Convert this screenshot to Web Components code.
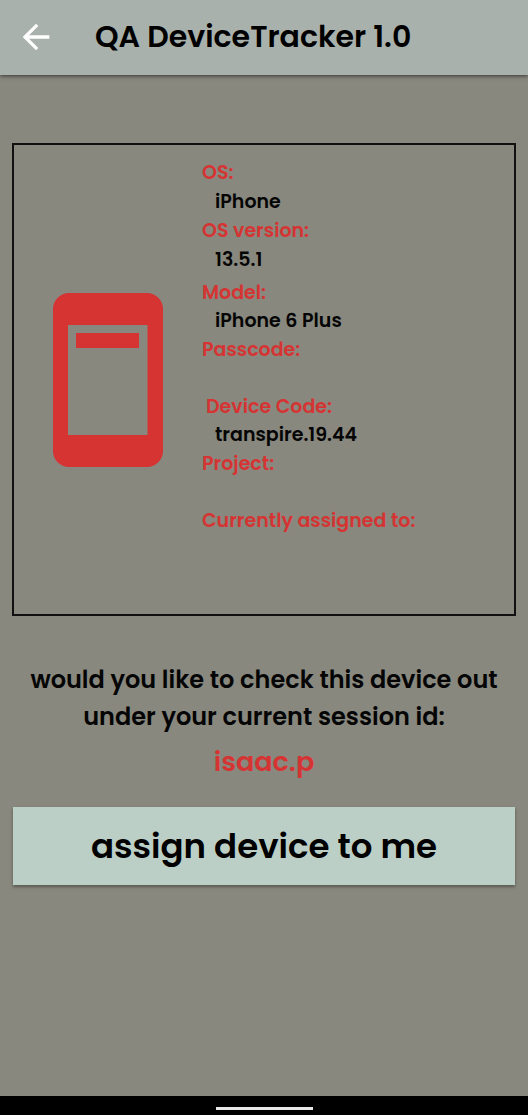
<!DOCTYPE html>
<html lang="en">
<head>
<meta charset="utf-8">
<meta name="viewport" content="width=device-width, initial-scale=1">
<title>QA DeviceTracker 1.0</title>
<style>
  html, body { margin: 0; height: 100%; }
  body {
    --accent: #d63333;
    --page: #88887e;
    background: var(--page);
    color: #050505;
    font-family: Poppins, Inter, sans-serif;
    font-weight: 600;
  }
</style>
</head>
<body>
<tracker-app>
  <app-header slot="header">QA DeviceTracker 1.0</app-header>
  <device-card>
    <device-field roomy label="OS:">iPhone</device-field>
    <device-field roomy label="OS version:">13.5.1</device-field>
    <device-field class="model" label="Model:">iPhone 6 Plus</device-field>
    <device-field label="Passcode:"></device-field>
    <device-field inset label="Device Code:">transpire.19.44</device-field>
    <device-field label="Project:"></device-field>
    <device-field label="Currently assigned to:"></device-field>
  </device-card>
  <session-prompt user="isaac.p">would you like to check this device out under your current session id:</session-prompt>
  <assign-button>assign device to me</assign-button>
  <gesture-bar slot="footer"></gesture-bar>
</tracker-app>

<script>
  const define = (name, html, setup) => {
    const template = document.createElement('template');
    template.innerHTML = html;
    customElements.define(name, class extends HTMLElement {
      constructor() {
        super();
        this.attachShadow({ mode: 'open' }).append(template.content.cloneNode(true));
      }
      connectedCallback() {
        if (setup) setup(this, this.shadowRoot);
      }
    });
  };

  define('tracker-app', `
    <style>
      :host { display: flex; flex-direction: column; min-height: 100vh; }
      main { flex: 1; padding: 68px 12px 24px; }
    </style>
    <slot name="header"></slot>
    <main><slot></slot></main>
    <slot name="footer"></slot>`);

  define('app-header', `
    <style>
      :host { display: block; }
      header {
        display: flex; align-items: center; gap: 39px;
        min-height: 75px; padding: 0 16px 1px; box-sizing: border-box;
        background: #a9b1ac; box-shadow: 0 1px 4px rgba(0, 0, 0, .6);
      }
      button { display: flex; padding: 0; border: 0; background: none; color: #fff; }
      h1 { margin: 0; font-size: 30px; line-height: 40px; font-weight: 600; color: #000; }
    </style>
    <header>
      <button type="button" aria-label="Back">
        <svg width="40" height="40" viewBox="0 0 24 24" fill="currentColor" aria-hidden="true">
          <path d="M20 11H7.830l5.590-5.590L12 4l-8 8 8 8 1.410-1.410L7.830 13H20v-2z"/>
        </svg>
      </button>
      <h1><slot></slot></h1>
    </header>`);

  define('device-card', `
    <style>
      :host { display: block; }
      section {
        display: flex; align-items: center; gap: 39px;
        padding: 13px 24px 51px 39px; border: 2px solid #111;
      }
      svg { flex: none; color: var(--accent); margin-top: 38px; }
      .fields { flex: 1; min-width: 0; }
      ::slotted(.model) { margin-top: 4px; }
    </style>
    <section>
      <svg width="110" height="174" viewBox="0 0 110 174" fill="currentColor" aria-hidden="true">
        <path fill-rule="evenodd" d="M16 0H94a16 16 0 0 1 16 16V158a16 16 0 0 1-16 16H16a16 16 0 0 1-16-16V16A16 16 0 0 1 16 0ZM15 32V142H94.500V32Z"/>
        <path d="M23 40H86V55H23Z"/>
      </svg>
      <div class="fields"><slot></slot></div>
    </section>`);

  define('device-field', `
    <style>
      :host { display: block; font-size: 19px; line-height: 29px; }
      dl, dd { margin: 0; }
      dt { color: var(--accent); }
      dd { padding-left: 13px; min-height: 28px; line-height: 28px; }
      :host([roomy]) dd { line-height: 29px; }
      :host([inset]) dt { padding-left: 4px; }
    </style>
    <dl><dt></dt><dd><slot></slot></dd></dl>`,
    (host, root) => { root.querySelector('dt').textContent = host.getAttribute('label'); });

  define('session-prompt', `
    <style>
      :host { display: block; margin-top: 45px; text-align: center; }
      p { margin: 0; font-size: 24px; line-height: 37px; }
      strong { display: block; margin-top: 6px; font-size: 27px; line-height: 42px; font-weight: 600; color: var(--accent); }
    </style>
    <p><slot></slot></p>
    <strong></strong>`,
    (host, root) => { root.querySelector('strong').textContent = host.getAttribute('user'); });

  define('assign-button', `
    <style>
      :host { display: block; margin: 24px 1px 0; }
      button {
        display: block; width: 100%; padding: 13px; border: 0;
        background: #bccfc6; color: #000; font: inherit; font-size: 34px; line-height: 52px;
        box-shadow: 0 2px 3px rgba(0, 0, 0, .35);
      }
    </style>
    <button type="button"><slot></slot></button>`);

  define('gesture-bar', `
    <style>
      :host { display: flex; justify-content: center; align-items: center; height: 19px; padding-top: 5px; box-sizing: border-box; background: #000; }
      span { width: 97px; height: 3px; background: #e8e8e8; }
    </style>
    <span></span>`);
</script>
</body>
</html>
